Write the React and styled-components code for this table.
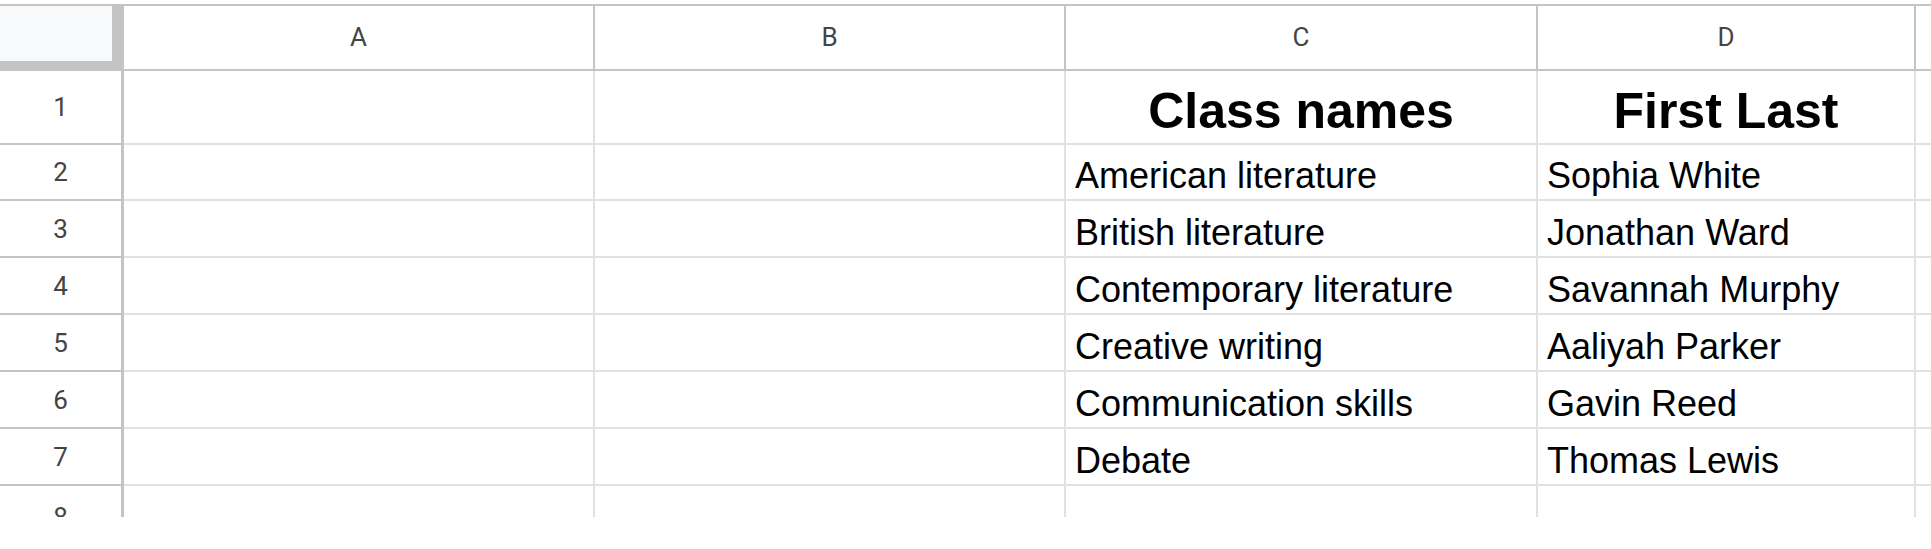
import React from "react";
import styled, { createGlobalStyle } from "styled-components";

const GlobalStyle = createGlobalStyle`
  html, body {
    margin: 0;
    padding: 0;
    background: #ffffff;
  }
  body {
    font-family: "Liberation Sans", Arial, sans-serif;
  }
`;

// Grid lines
const HEAD_LINE = "#c4c4c4";
const CELL_LINE = "#e1e1e1";

const Sheet = styled.div`
  margin-top: 4px;
  height: 511px;
  overflow: hidden;
  border-top: 2px solid ${HEAD_LINE};
  display: flex;
  flex-direction: column;
`;

const Row = styled.div`
  display: flex;
  flex-shrink: 0;
  height: ${(p) => p.$height}px;
`;

// Top-left corner with the frozen pane bars
const Corner = styled.div`
  box-sizing: border-box;
  width: 124px;
  flex-shrink: 0;
  background: #f8f9fa;
  border-right: 12px solid ${HEAD_LINE};
  border-bottom: 10px solid ${HEAD_LINE};
`;

const ColHeader = styled.div`
  box-sizing: border-box;
  width: ${(p) => (p.$width ? `${p.$width}px` : "auto")};
  flex: ${(p) => (p.$width ? "0 0 auto" : "1 1 auto")};
  display: flex;
  align-items: center;
  justify-content: center;
  border-right: ${(p) => (p.$last ? "none" : `2px solid ${HEAD_LINE}`)};
  border-bottom: 2px solid ${HEAD_LINE};
  font-family: Roboto, "Liberation Sans", Arial, sans-serif;
  font-size: 26px;
  color: #444444;
  padding-bottom: 2px;
`;

const RowHeader = styled.div`
  box-sizing: border-box;
  width: 124px;
  flex-shrink: 0;
  display: flex;
  align-items: ${(p) => (p.$clipped ? "flex-start" : "center")};
  justify-content: center;
  padding-top: ${(p) => (p.$clipped ? "16px" : "0")};
  border-right: 3px solid ${HEAD_LINE};
  border-bottom: 2px solid ${HEAD_LINE};
  font-family: Roboto, "Liberation Sans", Arial, sans-serif;
  font-size: 26px;
  color: #444444;
`;

const Cell = styled.div`
  box-sizing: border-box;
  width: ${(p) => (p.$width ? `${p.$width}px` : "auto")};
  flex: ${(p) => (p.$width ? "0 0 auto" : "1 1 auto")};
  display: flex;
  align-items: flex-end;
  justify-content: ${(p) => (p.$title ? "center" : "flex-start")};
  padding: 0 9px 3px;
  border-right: ${(p) => (p.$last ? "none" : `2px solid ${CELL_LINE}`)};
  border-bottom: 2px solid ${CELL_LINE};
  font-size: ${(p) => (p.$title ? "50px" : "36px")};
  font-weight: ${(p) => (p.$title ? 700 : 400)};
  line-height: 1.15;
  color: #000000;
  white-space: nowrap;
  overflow: hidden;
`;

const columns = [
  { label: "A", width: 471 },
  { label: "B", width: 471 },
  { label: "C", width: 472 },
  { label: "D", width: 378 },
  { label: "", width: null },
];

const rows = [
  { n: 1, height: 74, c: "Class names", d: "First Last", title: true },
  { n: 2, height: 56, c: "American literature", d: "Sophia White" },
  { n: 3, height: 57, c: "British literature", d: "Jonathan Ward" },
  { n: 4, height: 57, c: "Contemporary literature", d: "Savannah Murphy" },
  { n: 5, height: 57, c: "Creative writing", d: "Aaliyah Parker" },
  { n: 6, height: 57, c: "Communication skills", d: "Gavin Reed" },
  { n: 7, height: 57, c: "Debate", d: "Thomas Lewis" },
  { n: 8, height: 57, c: "", d: "", clipped: true },
];

export default function App() {
  return (
    <>
      <GlobalStyle />
      <Sheet>
        {/* Column headers */}
        <Row $height={65}>
          <Corner />
          {columns.map((col, i) => (
            <ColHeader key={i} $width={col.width} $last={!col.width}>
              {col.label}
            </ColHeader>
          ))}
        </Row>

        {/* Data rows */}
        {rows.map((row) => (
          <Row key={row.n} $height={row.height}>
            <RowHeader $clipped={row.clipped}>{row.n}</RowHeader>
            <Cell $width={471} />
            <Cell $width={471} />
            <Cell $width={472} $title={row.title}>
              {row.c}
            </Cell>
            <Cell $width={378} $title={row.title}>
              {row.d}
            </Cell>
            <Cell $last />
          </Row>
        ))}
      </Sheet>
    </>
  );
}
